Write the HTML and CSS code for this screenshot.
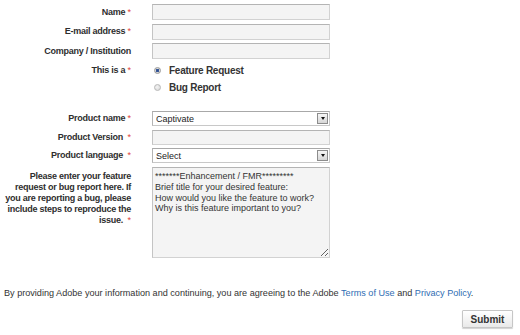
FILE: index.html
```html
<!DOCTYPE html>
<html lang="en">
<head>
<meta charset="utf-8">
<title>Feature Request / Bug Report</title>
<link rel="stylesheet" href="styles.css">
</head>
<body>
<form class="form">
  <div class="row">
    <label class="lbl">Name <span class="req">*</span></label>
    <input class="field" type="text">
  </div>
  <div class="row">
    <label class="lbl">E-mail address <span class="req">*</span></label>
    <input class="field" type="text">
  </div>
  <div class="row">
    <label class="lbl">Company / Institution</label>
    <input class="field" type="text">
  </div>
  <div class="row row-top row-radio">
    <div class="lbl lbl-radio">This is a <span class="req">*</span></div>
    <div class="radios">
      <label class="radio"><input class="radio-in" type="radio" name="kind" checked><span>Feature Request</span></label>
      <label class="radio"><input class="radio-in" type="radio" name="kind"><span>Bug Report</span></label>
    </div>
  </div>
  <div class="row row-product">
    <label class="lbl">Product name <span class="req">*</span></label>
    <div class="select">
      <select class="select-in"><option>Captivate</option></select>
      <span class="select-btn"><span class="tri"></span></span>
    </div>
  </div>
  <div class="row row-sm">
    <label class="lbl">Product Version &nbsp;<span class="req">*</span></label>
    <input class="field field-sm" type="text">
  </div>
  <div class="row row-sm">
    <label class="lbl">Product language &nbsp;<span class="req">*</span></label>
    <div class="select">
      <select class="select-in"><option>Select</option></select>
      <span class="select-btn"><span class="tri"></span></span>
    </div>
  </div>
  <div class="row row-top row-area">
    <label class="lbl lbl-multi">Please enter your feature<br>request or bug report here. If<br>you are reporting a bug, please<br>include steps to reproduce the<br>issue. &nbsp;<span class="req">*</span></label>
    <textarea class="area">*******Enhancement / FMR*********
Brief title for your desired feature:
How would you like the feature to work?
Why is this feature important to you?</textarea>
  </div>
  <p class="legal">By providing Adobe your information and continuing, you are agreeing to the Adobe <a href="#">Terms of Use</a> and <a href="#">Privacy Policy</a>.</p>
  <div class="actions">
    <button class="submit" type="button">Submit</button>
  </div>
</form>
</body>
</html>
```

FILE: styles.css
```css
html, body {
  margin: 0;
  padding: 0;
  background: #ffffff;
}

body {
  font-family: "Liberation Sans", Arial, sans-serif;
  color: #333333;
  width: 520px;
  height: 335px;
  overflow: hidden;
}

.form {
  padding-top: 4px;
}

.row {
  display: flex;
  align-items: center;
  gap: 21px;
  margin-bottom: 3.5px;
}

.row-top {
  align-items: flex-start;
}

.row-radio {
  margin-top: 2.5px;
  margin-bottom: 0;
}

.row-product {
  margin-top: 16.5px;
}

.row-sm {
  margin-top: 0.5px;
}

.row-area {
  margin-top: 1.5px;
}

.lbl {
  width: 131px;
  flex: none;
  text-align: right;
  font-size: 9px;
  font-weight: bold;
  letter-spacing: -0.25px;
  line-height: 11px;
  color: #2e2e2e;
}

.lbl-radio {
  line-height: 15px;
}

.lbl-multi {
  padding-top: 4px;
  line-height: 11px;
}

.req {
  color: #e0413b;
  font-weight: normal;
  letter-spacing: 0;
}

.field {
  box-sizing: border-box;
  width: 178px;
  height: 16px;
  margin: 0;
  padding: 1px 3px;
  background: #f4f4f4;
  border: 1px solid #d2d2d2;
  border-top-color: #b4b4b4;
  border-left-color: #c4c4c4;
  font-family: "Liberation Sans", Arial, sans-serif;
  font-size: 9px;
  color: #333333;
}

.field-sm {
  height: 15px;
}

.radios {
  display: flex;
  flex-direction: column;
  gap: 2px;
}

.radio {
  display: flex;
  align-items: center;
  height: 15px;
  font-size: 10px;
  font-weight: bold;
  letter-spacing: -0.25px;
  color: #333333;
}

.radio-in {
  appearance: none;
  -webkit-appearance: none;
  box-sizing: border-box;
  width: 7px;
  height: 7px;
  margin: 0 8px 0 2px;
  border-radius: 50%;
  border: 1px solid #b8b8b8;
  background: radial-gradient(circle at 40% 40%, #f4f4f4, #d4d4d4);
}

.radio-in:checked {
  border-color: #9a9a9a;
  background: radial-gradient(circle, #2c4a8a 0, #3d5e9e 1.6px, #d8d8d8 2px, #c6c6c6 100%);
}

.select {
  position: relative;
  width: 178px;
  height: 15px;
}

.select-in {
  appearance: none;
  -webkit-appearance: none;
  box-sizing: border-box;
  display: block;
  width: 100%;
  height: 100%;
  margin: 0;
  padding: 1px 14px 0 3px;
  background: #ffffff;
  border: 1px solid #c8c8c8;
  border-top-color: #a8a8a8;
  border-left-color: #b4b4b4;
  border-radius: 0;
  font-family: "Liberation Sans", Arial, sans-serif;
  font-size: 9px;
  line-height: 12px;
  color: #222222;
}

.select-btn {
  position: absolute;
  right: 2px;
  top: 2px;
  box-sizing: border-box;
  width: 11px;
  height: 11px;
  border: 1px solid #8c8c8c;
  background: linear-gradient(#f6f6f6, #d6d6d6);
  display: flex;
  align-items: center;
  justify-content: center;
}

.tri {
  width: 0;
  height: 0;
  border-left: 2.5px solid transparent;
  border-right: 2.5px solid transparent;
  border-top: 3px solid #111111;
}

.area {
  box-sizing: border-box;
  display: block;
  width: 178px;
  height: 91px;
  margin: 0;
  padding: 3.5px 2px 2px;
  background: #f4f4f4;
  border: 1px solid #d2d2d2;
  border-top-color: #b4b4b4;
  border-left-color: #c4c4c4;
  font-family: "Liberation Sans", Arial, sans-serif;
  font-size: 9px;
  line-height: 10.8px;
  color: #333333;
  resize: both;
}

.legal {
  margin: 30.5px 0 0 4px;
  font-size: 9.1px;
  line-height: 11px;
  color: #333333;
}

.legal a {
  color: #2f6db3;
  text-decoration: none;
}

.actions {
  display: flex;
  justify-content: flex-end;
  padding-right: 7px;
  margin-top: 11px;
}

.submit {
  box-sizing: border-box;
  width: 51px;
  height: 18px;
  padding: 0;
  border: 1px solid #c6c6c6;
  border-radius: 1px;
  background: linear-gradient(#ffffff, #e9e9e9);
  box-shadow: 0 1px 1px rgba(0, 0, 0, 0.18);
  font-family: "Liberation Sans", Arial, sans-serif;
  font-size: 10px;
  font-weight: bold;
  color: #333333;
}
```
